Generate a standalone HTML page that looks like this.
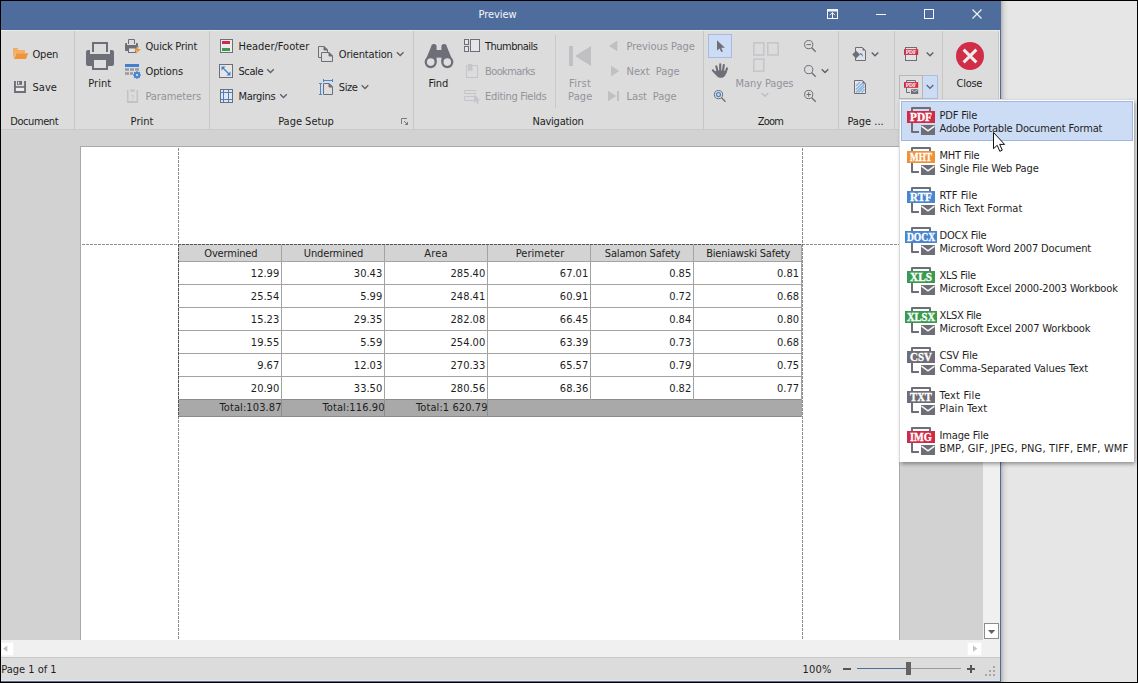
<!DOCTYPE html>
<html>
<head>
<meta charset="utf-8">
<title>Preview</title>
<style>
*{box-sizing:border-box;margin:0;padding:0}
html,body{width:1138px;height:683px;overflow:hidden}
body{position:relative;background:#e6e6e6;font-family:"DejaVu Sans Condensed","Liberation Sans",sans-serif;font-size:11px;color:#1e1e1e;line-height:13px}
div,span,svg{position:absolute}
svg{overflow:visible}
.t{white-space:nowrap;line-height:13px;height:13px}
.dis{color:#93939a}
.c{transform:translateX(-50%)}
.r{transform:translateX(-100%)}
.sep{top:31px;width:1px;height:98px;background:#c6c6c6}
.dv{width:1px;background:repeating-linear-gradient(to bottom,#8e8e8e 0 3px,transparent 3px 4px)}
.dh{height:1px;background:repeating-linear-gradient(to right,#8e8e8e 0 3px,transparent 3px 4px)}
.hl{background:#cddcf5;border:1px solid #a0b7e2}
</style>
</head>
<body>
<!-- window backgrounds -->
<div style="left:1001px;top:1px;width:7px;height:681px;background:linear-gradient(to right,#b4b4b4,#d6d6d6 40%,#e6e6e6)"></div>
<div style="left:1px;top:1px;width:1000px;height:29px;background:#4e6d9d"></div>
<div style="left:1px;top:30px;width:999px;height:100px;background:#dcdcdc;border-bottom:1px solid #cacaca"></div>
<div style="left:1px;top:130px;width:999px;height:510px;background:#d2d2d2"></div>
<div style="left:983px;top:130px;width:17px;height:510px;background:#f0f0f0"></div>
<div style="left:1px;top:640px;width:999px;height:17px;background:#f0f0f0"></div>
<div style="left:1px;top:657px;width:999px;height:24px;background:#dcdcdc;border-top:1px solid #c8c8c8"></div>
<div style="left:1px;top:680px;width:999px;height:1px;background:#e8e8e6"></div>
<div style="left:1px;top:681px;width:1000px;height:1px;background:#4e6d9d"></div>
<div style="left:1000px;top:1px;width:1px;height:681px;background:#4e6d9d"></div>
<div style="left:1px;top:30px;width:998px;height:1px;background:#ebebeb"></div>
<div style="left:998px;top:31px;width:1px;height:98px;background:#c8c8c8"></div>
<div style="left:999px;top:30px;width:1px;height:99px;background:#eeeeee"></div>

<!-- title -->
<span class="t c" style="left:497.5px;top:8px;color:#f4f6fa;--w:37.7;letter-spacing:-0.05px">Preview</span>
<svg style="left:0;top:0" width="1001" height="30" viewBox="0 0 1001 30" fill="none" stroke="#f4f6fa" stroke-width="1">
<rect x="827.500" y="9.500" width="10" height="9"/><path d="M827 10.500h11" stroke-width="2"/><path d="M832.500 18v-5.500M830 15.200l2.500-2.500 2.500 2.500"/>
<path d="M876 14.500h10"/>
<rect x="924.500" y="9.500" width="9" height="9"/>
<path d="M972.500 9.500l9 9M981.500 9.500l-9 9" stroke-width="1.100"/>
</svg>

<!-- ribbon -->
<!--RIBBON_TEXT_START-->
<div class="sep" style="left:74px"></div>
<div class="sep" style="left:209px"></div>
<div class="sep" style="left:413px"></div>
<div class="sep" style="left:703px"></div>
<div class="sep" style="left:838px"></div>
<div class="sep" style="left:894px"></div>
<div class="sep" style="left:942px"></div>
<div style="left:555px;top:35px;width:1px;height:73px;background:#c9c9c9"></div>
<!-- group labels (baseline 125) -->
<span class="t c" style="left:34.200px;top:115px;--w:47.9;letter-spacing:-0.41px">Document</span>
<span class="t c" style="left:142px;top:115px;--w:22.3;letter-spacing:0.01px">Print</span>
<span class="t c" style="left:306px;top:115px;--w:55.2;letter-spacing:-0.02px">Page Setup</span>
<span class="t c" style="left:558px;top:115px;--w:50.7;letter-spacing:-0.24px">Navigation</span>
<span class="t c" style="left:770.5px;top:115px;--w:25.6;letter-spacing:-0.81px">Zoom</span>
<span class="t c" style="left:865.5px;top:115px;--w:35.8;letter-spacing:-0.03px">Page ...</span>
<!-- Document -->
<span class="t" style="left:32.5px;top:48px;--w:25.3;letter-spacing:-0.21px">Open</span>
<span class="t" style="left:32.5px;top:81px;--w:23.9;letter-spacing:0.03px">Save</span>
<!-- Print -->
<span class="t c" style="left:99.7px;top:77px;--w:22.3;letter-spacing:0.01px">Print</span>
<span class="t" style="left:145.5px;top:40px;--w:51.3;letter-spacing:-0.21px">Quick Print</span>
<span class="t" style="left:145.5px;top:65px;--w:37.1;letter-spacing:-0.10px">Options</span>
<span class="t dis" style="left:145.5px;top:90px;--w:55.1;letter-spacing:-0.11px">Parameters</span>
<!-- Page Setup -->
<span class="t" style="left:238.5px;top:40px;--w:70.2;letter-spacing:-0.01px">Header/Footer</span>
<span class="t" style="left:238.5px;top:65px;--w:24.5;letter-spacing:-0.41px">Scale</span>
<span class="t" style="left:238.5px;top:90px;--w:36.7;letter-spacing:-0.29px">Margins</span>
<span class="t" style="left:338.8px;top:48px;--w:53.6;letter-spacing:-0.18px">Orientation</span>
<span class="t" style="left:338.8px;top:81px;--w:18.6;letter-spacing:-0.41px">Size</span>
<!-- Navigation -->
<span class="t c" style="left:438.3px;top:77px;--w:19.4;letter-spacing:-0.10px">Find</span>
<span class="t" style="left:485px;top:40px;--w:52.5;letter-spacing:-0.50px">Thumbnails</span>
<span class="t dis" style="left:485px;top:65px;--w:50;letter-spacing:-0.60px">Bookmarks</span>
<span class="t dis" style="left:485px;top:90px;--w:61.3;letter-spacing:-0.29px">Editing Fields</span>
<span class="t c dis" style="left:580px;top:77px;--w:21.3;letter-spacing:0.26px">First</span>
<span class="t c dis" style="left:580.3px;top:90px;--w:23.9;letter-spacing:0.16px">Page</span>
<span class="t dis" style="left:626.5px;top:40px;--w:67.7;letter-spacing:-0.05px">Previous Page</span>
<span class="t dis" style="left:626.5px;top:65px;word-spacing:3px;--w:52.7;letter-spacing:0.01px">Next Page</span>
<span class="t dis" style="left:626.5px;top:90px;word-spacing:3px;--w:49.5;letter-spacing:-0.08px">Last Page</span>
<!-- Zoom -->
<span class="t c dis" style="left:764.5px;top:77px;--w:57.5;letter-spacing:-0.11px">Many Pages</span>
<!-- Close -->
<span class="t c" style="left:969.4px;top:77px;--w:25.4;letter-spacing:-0.27px">Close</span>
<!--RIBBON_TEXT_END-->
<!--ICONS1_START-->
<svg style="left:0;top:0" width="1001" height="130" viewBox="0 0 1001 130">
<g id="i-open">
<path d="M13 48h5v2h7v3h-9.2l-2.8 5.5z" fill="#f4ad66"/>
<path d="M16.2 53.2H28.2L26 59H14z" fill="#f09537"/>
</g>
<g id="i-save" fill="#6e6e78">
<rect x="16" y="87.5" width="8" height="3.5" fill="#ececec"/>
<rect x="14" y="81" width="1.9" height="12"/><rect x="24.1" y="81" width="1.9" height="12"/>
<rect x="14" y="91" width="12" height="2"/><rect x="14" y="86.2" width="12" height="1.6"/>
<rect x="17" y="81" width="5" height="3.8"/><rect x="18" y="81.8" width="1.2" height="2.3" fill="#e4e4e4"/>
</g>
<g id="i-print" fill="#6e6e78">
<path d="M93 52V43H107V52" fill="none" stroke="#6e6e78" stroke-width="2"/>
<path d="M88 50h2v4h20v-4h2a2 2 0 0 1 2 2v12a2 2 0 0 1-2 2H88a2 2 0 0 1-2-2V52a2 2 0 0 1 2-2z"/>
<rect x="92" y="58" width="16" height="12"/><rect x="94" y="60" width="12" height="8" fill="#dedede"/>
</g>
<g id="i-qprint" fill="#6e6e78">
<path d="M128.5 44V39.5H134.5V44" fill="none" stroke="#6e6e78" stroke-width="1"/>
<path d="M126 43h1v2h9v-2h1a1 1 0 0 1 1 1v6a1 1 0 0 1-1 1H126a1 1 0 0 1-1-1V44a1 1 0 0 1 1-1z"/>
<rect x="128" y="47.5" width="8" height="5.5"/><rect x="129" y="48.5" width="6" height="3.5" fill="#e4e4e4"/>
<path d="M139 45.800L134 50.600h2.900l-1.100 3.500L141 49.100h-3.100z" fill="#f09537" stroke="#dcdcdc" stroke-width=".8" paint-order="stroke"/>
</g>
<g id="i-options">
<rect x="125" y="64" width="14" height="3" fill="#4080cf"/>
<g fill="#9a9aa0"><rect x="125" y="68.2" width="4" height="2.6"/><rect x="130" y="68.2" width="4" height="2.6"/><rect x="135" y="68.2" width="4" height="2.6"/>
<rect x="125" y="72.2" width="4" height="2.6"/><rect x="130" y="72.2" width="3" height="2.6"/></g>
<circle cx="137" cy="75" r="4.3" fill="#dcdcdc"/>
<circle cx="137" cy="75" r="2.2" fill="none" stroke="#4a86d0" stroke-width="2"/>
<g stroke="#4a86d0" stroke-width="1.6"><path d="M137 71.2v7.6M133.2 75h7.6M134.3 72.3l5.4 5.4M139.7 72.3l-5.4 5.4"/></g>
<circle cx="137" cy="75" r="1" fill="#e8eef8"/>
</g>
<g id="i-params" fill="#c2c2c8">
<path d="M127.7 90V102H137.3V90" fill="none" stroke="#c2c2c8" stroke-width="1.5"/>
<rect x="127" y="101" width="11" height="2"/>
<rect x="130" y="89.4" width="5" height="2.4" rx="1"/>
<text x="132.5" y="99.5" font-size="7" text-anchor="middle" fill="#c2c2c8" font-family="'Liberation Sans',sans-serif">?</text>
</g>
<g id="i-hf">
<rect x="220.5" y="39.5" width="12" height="13" fill="#ececec" stroke="#6e6e78"/>
<rect x="222" y="41" width="8" height="3" fill="#d02b45"/><rect x="222" y="48" width="8" height="3" fill="#3a9a50"/>
</g>
<g id="i-scale">
<rect x="219.5" y="64.5" width="13" height="13" fill="#e6e6e6" stroke="#6e6e78"/>
<path d="M222.5 67.5L229.5 74.5" stroke="#4080cf" stroke-width="1.3"/>
<path d="M221.5 66.5h4l-4 4zM230.5 75.5h-4l4-4z" fill="#4080cf"/>
</g>
<g id="i-margins">
<rect x="220.5" y="89.5" width="12" height="13" fill="#e6e6e6" stroke="#6e6e78"/>
<path d="M223.5 90v12M228.5 90v12M221 92.5h11M221 99.5h11" stroke="#4080cf" stroke-width="1"/>
</g>
</svg>
<!--ICONS1_END-->
<!--ICONS2_START-->
<svg style="left:0;top:0" width="1001" height="130" viewBox="0 0 1001 130">
<defs>
<path id="chev" d="M-3.3 -1.7L0 1.6L3.3 -1.7" fill="none" stroke-width="1.35"/>
<g id="mag"><circle cx="0" cy="0" r="4.1" fill="none" stroke="#6e6e78" stroke-width="1"/><path d="M3 3.2L7 7.2" stroke="#6e6e78" stroke-width="1.3"/></g>
</defs>
<g stroke="#60606a">
<use href="#chev" x="270.5" y="71"/><use href="#chev" x="283.5" y="96"/>
<use href="#chev" x="400.2" y="54"/><use href="#chev" x="365" y="87"/>
<use href="#chev" x="825" y="71"/><use href="#chev" x="875" y="54.2"/>
<use href="#chev" x="930" y="54.2"/><use href="#chev" x="930" y="86.5"/>
</g>
<use href="#chev" x="765" y="94.7" stroke="#bdbdc2"/>
<g id="i-orient" fill="#dedede" stroke="#6e6e78" stroke-width="1">
<path d="M318.500 46.500H324L327.500 50V57.500H318.500Z"/><path d="M324 46.500V50H327.500Z" fill="#6e6e78"/>
<path d="M321.500 52.500H329L332.500 56V61.500H321.500Z"/><path d="M329 52.500V56H332.500Z" fill="#6e6e78"/>
</g>
<g id="i-size">
<path d="M323.500 83.500H329L332.500 87V94.500H323.500Z" fill="#dedede" stroke="#6e6e78"/><path d="M329 83.500V87H332.500Z" fill="#6e6e78" stroke="#6e6e78"/>
<path d="M320.500 83.500V94.500M319 83.500h3M319 94.500h3M323.500 80.500H332.500M323.500 79v3M332.500 79v3" stroke="#4688d8" stroke-width="1" fill="none"/>
</g>
<g id="i-launch" stroke="#7a7a7a" fill="none" stroke-width="1">
<path d="M401.5 124V118.5H407"/><path d="M404 121L407.5 124.5" /><path d="M408 121.5V125H404.5Z" fill="#7a7a7a" stroke="none"/>
</g>
<g id="i-find" fill="#6e6e78">
<path d="M431.2 46.6a2.7 2.7 0 0 1 5.4 0V62H424.8Z"/><path d="M446.8 46.6a2.7 2.7 0 0 0-5.4 0V62H453.2Z"/>
<rect x="436" y="50" width="6" height="7.6"/>
<circle cx="430.7" cy="62.1" r="6.1"/><circle cx="447.3" cy="62.1" r="6.1"/>
<circle cx="430.7" cy="62.1" r="3.8" fill="#dedede"/><circle cx="447.3" cy="62.1" r="3.8" fill="#dedede"/>
</g>
<g id="i-thumbs" fill="#e6e6e6" stroke="#6e6e78">
<rect x="464.5" y="39.5" width="4" height="5"/><rect x="464.5" y="46.5" width="4" height="5"/><rect x="470.5" y="39.5" width="9" height="12"/>
</g>
<g id="i-bookm" fill="none" stroke="#c4c4ca">
<rect x="466.5" y="65.5" width="11" height="12"/><path d="M468.5 64.5h3.5v6.5l-1.75-1.5-1.75 1.5z" fill="#c4c4ca"/>
</g>
<g id="i-edit" fill="none" stroke="#c4c4ca">
<path d="M476.5 93.5H464.5V90.5H476.5"/><path d="M474 100.500H464.500V96.500H476.500"/>
<path d="M474.200 94.600v8.400l2-1.900 1.300 2.900 1.300-.6-1.300-2.800h2.700z" fill="#c4c4ca" stroke="none"/>
</g>
<g id="i-nav" fill="#bfbfc4">
<rect x="569" y="46" width="4" height="20"/><path d="M591 46V66L575 56Z"/>
<path d="M617.300 40.800V51.200L609 46Z"/>
<path d="M611 65.800V76.200L619.300 71Z"/>
<path d="M608 90.800V101.200L616.300 96Z"/><rect x="617" y="91" width="2" height="10"/>
</g>
<g id="i-pointer">
<rect x="708.500" y="34.500" width="23" height="23" fill="#cddcf5" stroke="#a5bbe4"/>
<path d="M717 40.200V50.600L719.600 48.400 721.300 52.100 722.900 51.400 721.200 47.700H724.900Z" fill="#6e6e78"/>
</g>
<g id="i-hand" fill="#6e6e78" stroke="#6e6e78" stroke-linecap="round">
<path d="M716.300 66.300l1.200 5M720.200 64.300v6.500M723.800 65l-.8 6M727 68.400l-1.600 4.600" stroke-width="2.100" fill="none"/>
<path d="M712.800 70.300l3.200 3.400" stroke-width="2" fill="none"/>
<path d="M714.800 71.500c2-1 9-1.500 11.400 0 .3 2.500-1.200 6.300-5.600 6.300-3.200 0-5.200-3-5.800-6.300z" stroke="none"/>
</g>
<g id="i-magb"><use href="#mag" x="718.500" y="94.600"/><circle cx="718.500" cy="94.600" r="2" fill="none" stroke="#4a86d0" stroke-width="1.300"/></g>
<g id="i-many" fill="none" stroke="#c6c6ca" stroke-width="1.600">
<rect x="753.800" y="42.800" width="10" height="12.200"/><rect x="767.800" y="42.800" width="10.400" height="12.200"/><rect x="753.800" y="59.200" width="10" height="12"/>
</g>
<g id="i-zooms">
<use href="#mag" x="808.700" y="44.600"/><path d="M806.500 44.600h4.500" stroke="#6e6e78" stroke-width="1"/>
<use href="#mag" x="808.700" y="69.600"/>
<use href="#mag" x="808.700" y="94.500"/><path d="M806.500 94.500h4.500M808.700 92.200v4.600" stroke="#6e6e78" stroke-width="1"/>
</g>
<g id="i-pagecolor">
<path d="M855.500 47.500H862.500L865.500 50.500V60.500H855.500Z" fill="#e2e2e2" stroke="#6e6e78"/><path d="M862.500 47.500V50.500H865.500Z" fill="#6e6e78"/>
<path d="M856.100 50.800L860 54.600 856.100 58.400 852.200 54.600Z" fill="#6e6e78"/>
<path d="M860 53c2 .2 3 1.400 3 4.200-1-1.500-1.600-2.400-3-2.600z" fill="#4a86d0"/>
</g>
<g id="i-watermark">
<path d="M854.500 80.500H862.500L865.500 83.500V93.500H854.500Z" fill="#e6e6e6" stroke="#6e6e78"/>
<path d="M856 86l4-4M856 89.500l6.500-6.500M856 92.500l8.500-8.500M858.500 92.500L864.500 86.500M861.500 92.500L864.500 89.500" stroke="#7fb0e6" stroke-width="1.200"/>
<path d="M862.500 80.500V83.500H865.500Z" fill="#6e6e78"/>
</g>
<g id="i-pdf">
<rect x="905.500" y="47.500" width="11" height="13" fill="#e2e2e2" stroke="#6e6e78"/>
<rect x="904" y="49.200" width="14.200" height="5.700" fill="#d02b45"/>
<text x="911.100" y="54" font-size="5.500" font-weight="bold" fill="#fff" text-anchor="middle" font-family="'Liberation Serif',serif">PDF</text>
</g>
<g id="i-send">
<rect x="899.500" y="75.500" width="23" height="23" fill="#dedede" stroke="#b6b6b6"/>
<rect x="923" y="75" width="15" height="24" fill="#cddcf5"/><path d="M923 75.500H937.500V98.500H923" fill="none" stroke="#a9bde6"/>
<path d="M915.500 82V80.500H906.500V92.500H910" fill="none" stroke="#6e6e78"/>
<rect x="904" y="82.100" width="14.200" height="5.700" fill="#d02b45"/>
<text x="911.100" y="86.900" font-size="5.500" font-weight="bold" fill="#fff" text-anchor="middle" font-family="'Liberation Serif',serif">PDF</text>
<rect x="911" y="89.200" width="7.200" height="4.800" fill="#6e6e78"/><path d="M911.600 89.800l3 2 3-2" stroke="#e0e0e0" stroke-width=".8" fill="none"/>
</g>
<use href="#chev" x="930" y="86.800" stroke="#60606a"/>
<g id="i-close">
<circle cx="970" cy="56" r="14" fill="#d12d47"/>
<path d="M963.600 49.600L976.400 62.400M976.400 49.600L963.600 62.400" stroke="#ececec" stroke-width="3" fill="none"/>
</g>
</svg>
<!--ICONS2_END-->
<!--RIBBON_ICONS-->

<!-- page -->
<div style="left:80px;top:146px;width:820px;height:494px;background:#fff;border:1px solid #a9a9a9;border-bottom:none"></div>
<!--PAGE_START-->
<div class="dv" style="left:178px;top:148px;height:492px"></div>
<div class="dv" style="left:802px;top:148px;height:492px"></div>
<div class="dh" style="left:82px;top:244px;width:817px"></div>
<!-- table -->
<div style="left:179px;top:245px;width:622px;height:16px;background:#d3d3d3"></div>
<div style="left:179px;top:400px;width:622px;height:16px;background:#a9a9a9"></div>
<div style="left:178px;top:244px;width:625px;height:1px;background:repeating-linear-gradient(to right,#555 0 3px,#c8c8c8 3px 4px)"></div>
<div style="left:178px;top:244px;width:1px;height:173px;background:repeating-linear-gradient(to bottom,#555 0 3px,#c8c8c8 3px 4px)"></div>
<div style="left:179px;top:261px;width:623px;height:1px;background:#a3a3a3"></div>
<div style="left:179px;top:284px;width:623px;height:1px;background:#a3a3a3"></div>
<div style="left:179px;top:307px;width:623px;height:1px;background:#a3a3a3"></div>
<div style="left:179px;top:330px;width:623px;height:1px;background:#a3a3a3"></div>
<div style="left:179px;top:353px;width:623px;height:1px;background:#a3a3a3"></div>
<div style="left:179px;top:376px;width:623px;height:1px;background:#a3a3a3"></div>
<div style="left:179px;top:399px;width:623px;height:1px;background:#8a8a8a"></div>
<div style="left:179px;top:416px;width:623px;height:1px;background:#8a8a8a"></div>
<div style="left:281px;top:245px;width:1px;height:155px;background:#a3a3a3"></div>
<div style="left:384px;top:245px;width:1px;height:155px;background:#a3a3a3"></div>
<div style="left:487px;top:245px;width:1px;height:155px;background:#a3a3a3"></div>
<div style="left:590px;top:245px;width:1px;height:155px;background:#a3a3a3"></div>
<div style="left:693px;top:245px;width:1px;height:155px;background:#a3a3a3"></div>
<div style="left:801px;top:245px;width:1px;height:172px;background:#a3a3a3"></div>
<div style="left:281px;top:400px;width:1px;height:16px;background:#8e8e8e"></div>
<div style="left:384px;top:400px;width:1px;height:16px;background:#8e8e8e"></div>
<div style="left:487px;top:400px;width:1px;height:16px;background:#8e8e8e"></div>
<!-- header text baseline 257 -->
<span class="t c" style="left:230.8px;top:247px;--w:52.6;letter-spacing:-0.19px">Overmined</span>
<span class="t c" style="left:333.5px;top:247px;--w:59;letter-spacing:-0.15px">Undermined</span>
<span class="t c" style="left:436px;top:247px;--w:23;letter-spacing:0.25px">Area</span>
<span class="t c" style="left:540px;top:247px;--w:48;letter-spacing:0.03px">Perimeter</span>
<span class="t c" style="left:642.5px;top:247px;--w:75;letter-spacing:-0.19px">Salamon Safety</span>
<span class="t c" style="left:748.2px;top:247px;--w:83.7;letter-spacing:-0.19px">Bieniawski Safety</span>
<span class="t r" style="left:279.2px;top:267px">12.99</span>
<span class="t r" style="left:382.2px;top:267px">30.43</span>
<span class="t r" style="left:485.2px;top:267px">285.40</span>
<span class="t r" style="left:588.2px;top:267px">67.01</span>
<span class="t r" style="left:691.2px;top:267px">0.85</span>
<span class="t r" style="left:799.0px;top:267px">0.81</span>
<span class="t r" style="left:279.2px;top:290px">25.54</span>
<span class="t r" style="left:382.2px;top:290px">5.99</span>
<span class="t r" style="left:485.2px;top:290px">248.41</span>
<span class="t r" style="left:588.2px;top:290px">60.91</span>
<span class="t r" style="left:691.2px;top:290px">0.72</span>
<span class="t r" style="left:799.0px;top:290px">0.68</span>
<span class="t r" style="left:279.2px;top:313px">15.23</span>
<span class="t r" style="left:382.2px;top:313px">29.35</span>
<span class="t r" style="left:485.2px;top:313px">282.08</span>
<span class="t r" style="left:588.2px;top:313px">66.45</span>
<span class="t r" style="left:691.2px;top:313px">0.84</span>
<span class="t r" style="left:799.0px;top:313px">0.80</span>
<span class="t r" style="left:279.2px;top:336px">19.55</span>
<span class="t r" style="left:382.2px;top:336px">5.59</span>
<span class="t r" style="left:485.2px;top:336px">254.00</span>
<span class="t r" style="left:588.2px;top:336px">63.39</span>
<span class="t r" style="left:691.2px;top:336px">0.73</span>
<span class="t r" style="left:799.0px;top:336px">0.68</span>
<span class="t r" style="left:279.2px;top:359px">9.67</span>
<span class="t r" style="left:382.2px;top:359px">12.03</span>
<span class="t r" style="left:485.2px;top:359px">270.33</span>
<span class="t r" style="left:588.2px;top:359px">65.57</span>
<span class="t r" style="left:691.2px;top:359px">0.79</span>
<span class="t r" style="left:799.0px;top:359px">0.75</span>
<span class="t r" style="left:279.2px;top:382px">20.90</span>
<span class="t r" style="left:382.2px;top:382px">33.50</span>
<span class="t r" style="left:485.2px;top:382px">280.56</span>
<span class="t r" style="left:588.2px;top:382px">68.36</span>
<span class="t r" style="left:691.2px;top:382px">0.82</span>
<span class="t r" style="left:799.0px;top:382px">0.77</span>
<span class="t r" style="left:281.6px;top:401px;--w:61.5;letter-spacing:0.10px">Total:103.87</span>
<span class="t r" style="left:384.6px;top:401px;--w:61.5;letter-spacing:0.10px">Total:116.90</span>
<span class="t r" style="left:487.6px;top:401px;--w:71;letter-spacing:0.09px">Total:1 620.79</span>
<!--PAGE_END-->

<div style="left:1px;top:642px;width:13px;height:14px;background:#fff;border:1px solid #f4f4f4"></div>
<div style="left:967px;top:642px;width:15px;height:14px;background:#fff;border:1px solid #f4f4f4"></div>
<div style="left:984px;top:623px;width:15px;height:16px;background:#fff;border:1px solid #8c8c8c"></div>
<svg style="left:0;top:600px" width="1001" height="83" viewBox="0 600 1001 83">
<path d="M7.300 645.600V651.800L3 648.700Z" fill="#c2c2c2"/>
<path d="M973 645.400V651.800L977.200 648.600Z" fill="#c2c2c2"/>
<path d="M988 630H995.200L991.600 633.900Z" fill="#606060"/>
<rect x="843" y="668" width="8" height="2" fill="#555"/>
<rect x="857" y="668" width="50" height="1" fill="#4e6d9d"/><rect x="907" y="668" width="54" height="1" fill="#9c9c9c"/>
<rect x="906" y="662" width="5" height="13" fill="#636363"/>
<path d="M967 669h8M971 665v8" stroke="#555" stroke-width="2" fill="none"/>
<g fill="#a8a8a8"><rect x="993" y="666" width="2" height="2"/><rect x="989" y="670" width="2" height="2"/><rect x="993" y="670" width="2" height="2"/><rect x="985" y="674" width="2" height="2"/><rect x="989" y="674" width="2" height="2"/><rect x="993" y="674" width="2" height="2"/></g>
</svg>


<span class="t" style="left:1.2px;top:663px;--w:55;letter-spacing:0.00px">Page 1 of 1</span>
<span class="t" style="left:802.600px;top:663px;--w:28.400;letter-spacing:0.20px">100%</span>


<!-- popup -->
<div style="left:900px;top:100px;width:234px;height:362px;background:#fff;box-shadow:1px 2px 4px rgba(0,0,0,.38)"></div>
<div style="left:899px;top:99px;width:1px;height:363px;background:#d9d9d9"></div>
<div style="left:899px;top:99px;width:235px;height:1px;background:#d9d9d9"></div>
<!--POPUP_START-->
<div class="hl" style="left:901px;top:101px;width:232px;height:40px"></div>
<svg style="left:900px;top:100px" width="234" height="362" viewBox="900 100 234 362">
<defs><g id="sendpg"><path d="M930 111V108H912V132H919" fill="none" stroke="#6e6e78" stroke-width="2" stroke-linejoin="round"/><rect x="921" y="125" width="14" height="10" fill="#6e6e78"/><path d="M921.500 126.200l6.500 4.600 6.500-4.600" fill="none" stroke="#f4f4f4" stroke-width="1.600"/></g></defs>
<use href="#sendpg" y="0"/>
<rect x="907" y="111" width="28" height="12" fill="#d02b45"/>
<text x="910.1" y="120.9" font-size="11.500" font-weight="bold" fill="#fff" stroke="#fff" stroke-width=".35" textLength="21.8" lengthAdjust="spacingAndGlyphs" font-family="'Liberation Serif',serif">PDF</text>
<use href="#sendpg" y="40"/>
<rect x="907" y="151" width="28" height="12" fill="#ef9339"/>
<text x="910.1" y="160.9" font-size="11.500" font-weight="bold" fill="#fff" stroke="#fff" stroke-width=".35" textLength="21.8" lengthAdjust="spacingAndGlyphs" font-family="'Liberation Serif',serif">MHT</text>
<use href="#sendpg" y="80"/>
<rect x="907" y="191" width="28" height="12" fill="#4a86d0"/>
<text x="910.1" y="200.9" font-size="11.500" font-weight="bold" fill="#fff" stroke="#fff" stroke-width=".35" textLength="21.8" lengthAdjust="spacingAndGlyphs" font-family="'Liberation Serif',serif">RTF</text>
<use href="#sendpg" y="120"/>
<rect x="905" y="231" width="32" height="12" fill="#4a86d0"/>
<text x="906.9" y="240.9" font-size="11.500" font-weight="bold" fill="#fff" stroke="#fff" stroke-width=".35" textLength="28.2" lengthAdjust="spacingAndGlyphs" font-family="'Liberation Serif',serif">DOCX</text>
<use href="#sendpg" y="160"/>
<rect x="907" y="271" width="28" height="12" fill="#3a9a50"/>
<text x="910.1" y="280.9" font-size="11.500" font-weight="bold" fill="#fff" stroke="#fff" stroke-width=".35" textLength="21.8" lengthAdjust="spacingAndGlyphs" font-family="'Liberation Serif',serif">XLS</text>
<use href="#sendpg" y="200"/>
<rect x="905" y="311" width="32" height="12" fill="#3a9a50"/>
<text x="906.9" y="320.9" font-size="11.500" font-weight="bold" fill="#fff" stroke="#fff" stroke-width=".35" textLength="28.2" lengthAdjust="spacingAndGlyphs" font-family="'Liberation Serif',serif">XLSX</text>
<use href="#sendpg" y="240"/>
<rect x="907" y="351" width="28" height="12" fill="#6e6e78"/>
<text x="910.1" y="360.9" font-size="11.500" font-weight="bold" fill="#fff" stroke="#fff" stroke-width=".35" textLength="21.8" lengthAdjust="spacingAndGlyphs" font-family="'Liberation Serif',serif">CSV</text>
<use href="#sendpg" y="280"/>
<rect x="907" y="391" width="28" height="12" fill="#6e6e78"/>
<text x="910.1" y="400.9" font-size="11.500" font-weight="bold" fill="#fff" stroke="#fff" stroke-width=".35" textLength="21.8" lengthAdjust="spacingAndGlyphs" font-family="'Liberation Serif',serif">TXT</text>
<use href="#sendpg" y="320"/>
<rect x="907" y="431" width="28" height="12" fill="#d02b45"/>
<text x="910.1" y="440.9" font-size="11.500" font-weight="bold" fill="#fff" stroke="#fff" stroke-width=".35" textLength="21.8" lengthAdjust="spacingAndGlyphs" font-family="'Liberation Serif',serif">IMG</text>
</svg>
<span class="t" style="left:939.500px;top:109px;--w:37.3;letter-spacing:-0.16px">PDF File</span>
<span class="t" style="left:939.500px;top:122px;--w:162.5;letter-spacing:-0.16px">Adobe Portable Document Format</span>
<span class="t" style="left:939.500px;top:149px;--w:39.6;letter-spacing:-0.22px">MHT File</span>
<span class="t" style="left:939.500px;top:162px;--w:98.9;letter-spacing:-0.13px">Single File Web Page</span>
<span class="t" style="left:939.500px;top:189px;--w:37.3;letter-spacing:0.05px">RTF File</span>
<span class="t" style="left:939.500px;top:202px;--w:82.4;letter-spacing:0.04px">Rich Text Format</span>
<span class="t" style="left:939.500px;top:229px;--w:46.7;letter-spacing:-0.19px">DOCX File</span>
<span class="t" style="left:939.500px;top:242px;--w:151.1;letter-spacing:-0.17px">Microsoft Word 2007 Document</span>
<span class="t" style="left:939.500px;top:269px;--w:36;letter-spacing:-0.24px">XLS File</span>
<span class="t" style="left:939.500px;top:282px;--w:178;letter-spacing:-0.16px">Microsoft Excel 2000-2003 Workbook</span>
<span class="t" style="left:939.500px;top:309px;--w:41.5;letter-spacing:-0.37px">XLSX File</span>
<span class="t" style="left:939.500px;top:322px;--w:150.4;letter-spacing:-0.14px">Microsoft Excel 2007 Workbook</span>
<span class="t" style="left:939.500px;top:349px;--w:37.8;letter-spacing:-0.18px">CSV File</span>
<span class="t" style="left:939.500px;top:362px;--w:148.3;letter-spacing:-0.10px">Comma-Separated Values Text</span>
<span class="t" style="left:939.500px;top:389px;--w:40.6;letter-spacing:0.21px">Text File</span>
<span class="t" style="left:939.500px;top:402px;--w:47.1;letter-spacing:0.09px">Plain Text</span>
<span class="t" style="left:939.500px;top:429px;--w:48.9;letter-spacing:-0.14px">Image File</span>
<span class="t" style="left:939.500px;top:442px;--w:188.4;letter-spacing:0.14px">BMP, GIF, JPEG, PNG, TIFF, EMF, WMF</span>
<!--POPUP_END-->

<svg style="left:990px;top:130px" width="16" height="24" viewBox="990 130 16 24">
<path d="M993.500 132.500V148.700L997.200 145.300 999.800 151.300 1002.300 150.200 999.700 144.400H1004.600Z" fill="#fff" stroke="#111" stroke-width="1" stroke-linejoin="miter"/>
</svg>
<div style="left:0;top:0;width:1138px;height:683px;border:1px solid #000"></div>
</body>
</html>
